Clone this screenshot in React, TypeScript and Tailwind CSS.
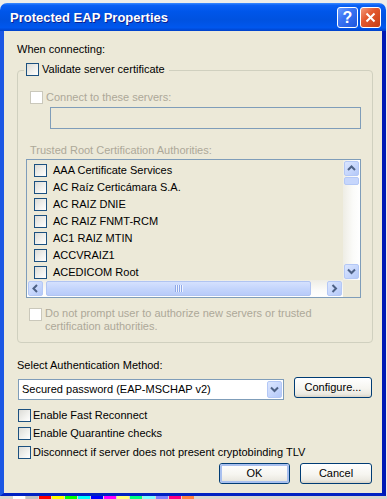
import type { ReactNode } from 'react'

const certs = [
  'AAA Certificate Services',
  'AC Raíz Certicámara S.A.',
  'AC RAIZ DNIE',
  'AC RAIZ FNMT-RCM',
  'AC1 RAIZ MTIN',
  'ACCVRAIZ1',
  'ACEDICOM Root',
]

const swatches = [
  'bg-white',
  'bg-[#c0c0c0]',
  'bg-[#ff0000]',
  'bg-[#ffff00]',
  'bg-[#00ff00]',
  'bg-[#00ffff]',
  'bg-[#0000ff]',
  'bg-[#ff00ff]',
  'bg-[#ffff80]',
  'bg-[#00ff80]',
  'bg-[#80ffff]',
  'bg-[#8080ff]',
  'bg-[#ff0080]',
  'bg-[#ff8040]',
]

function Check({ disabled = false }: { disabled?: boolean }) {
  return disabled ? (
    <span className="block w-[13px] h-[13px] shrink-0 border border-[#cac8bb] bg-white" />
  ) : (
    <span className="block w-[13px] h-[13px] shrink-0 border border-[#1c5180] bg-[linear-gradient(135deg,#dcdcd7_0%,#f2f2ef_60%,#ffffff_100%)]" />
  )
}

function Chevron({ dir }: { dir: 'up' | 'down' | 'left' | 'right' }) {
  const vert = dir === 'up' || dir === 'down'
  const d = {
    up: 'M1 5L4.5 1.5L8 5',
    down: 'M1 1.5L4.5 5L8 1.5',
    left: 'M5 1L1.5 4.5L5 8',
    right: 'M1.5 1L5 4.5L1.5 8',
  }[dir]
  return (
    <svg width={vert ? 9 : 7} height={vert ? 7 : 9} viewBox={vert ? '0 0 9 7' : '0 0 7 9'}>
      <path d={d} fill="none" stroke="#4d6185" strokeWidth="2" />
    </svg>
  )
}

function ScrollBtn({ dir }: { dir: 'up' | 'down' | 'left' | 'right' }) {
  return (
    <div className="w-[17px] h-[17px] shrink-0 p-px">
      <div className="w-full h-full rounded-[2px] border border-[#b4c8f6] bg-[linear-gradient(135deg,#dbe6fe_0%,#c6d6fc_55%,#b3c8f8_100%)] flex items-center justify-center">
        <Chevron dir={dir} />
      </div>
    </div>
  )
}

function XpButton({ children, w, isDefault = false }: { children: ReactNode; w: string; isDefault?: boolean }) {
  return (
    <div className={`${w} h-[21px] rounded-[3px] border border-[#003c74] bg-[linear-gradient(180deg,#ffffff_0%,#f6f5f0_55%,#ebe9e1_85%,#d8d2c6_100%)] flex items-center justify-center`}>
      <div className={`w-full h-full rounded-[2px] flex items-center justify-center ${isDefault ? 'border-2 border-[#a9c0ef]' : ''}`}>
        {children}
      </div>
    </div>
  )
}

function TitleBar() {
  return (
    <div className="h-[28px] rounded-t-[7px] bg-[linear-gradient(180deg,#3d8cff_0%,#0a60f5_8%,#0056ea_30%,#0052e0_60%,#0057ee_88%,#0041c9_100%)] flex items-start pl-[10px] pr-[5px]">
      <span className="mt-[7px] text-[13px] leading-[15px] font-bold text-white [text-shadow:1px_1px_0_#0d1f8f]">
        Protected EAP Properties
      </span>
      <div className="ml-auto mt-[4px] flex gap-[2px]">
        <div className="w-[21px] h-[21px] rounded-[3px] border border-white bg-[linear-gradient(135deg,#6a9cff_0%,#3b74f4_40%,#1d56dd_100%)] flex items-center justify-center">
          <span className="text-white font-bold text-[16px] leading-[16px]">?</span>
        </div>
        <div className="w-[21px] h-[21px] rounded-[3px] border border-white bg-[linear-gradient(135deg,#f39a7c_0%,#e3592f_40%,#c73d14_100%)] flex items-center justify-center">
          <svg width="11" height="11" viewBox="0 0 11 11">
            <path d="M1.5 1.5L9.5 9.5M9.5 1.5L1.5 9.5" stroke="#ffffff" strokeWidth="2" />
          </svg>
        </div>
      </div>
    </div>
  )
}

function CertList() {
  return (
    <div className="ml-[8px] mt-[2px] w-[335px] h-[139px] border border-[#7f9db9] bg-[#ece9d8] flex flex-col">
      <div className="h-[120px] flex">
        <div className="flex-1 pt-[2px] pl-[7px] overflow-hidden">
          {certs.map((c) => (
            <div key={c} className="h-[17px] flex items-center gap-[6px] whitespace-nowrap">
              <Check />
              <span>{c}</span>
            </div>
          ))}
        </div>
        <div className="w-[17px] flex flex-col bg-[linear-gradient(90deg,#eeede5_0%,#fbfbf9_60%,#ffffff_100%)]">
          <ScrollBtn dir="up" />
          <div className="mx-px h-[8px] rounded-[2px] border border-[#b4c8f6] bg-[#c6d6fc]" />
          <div className="flex-1" />
          <ScrollBtn dir="down" />
        </div>
      </div>
      <div className="h-[17px] flex">
        <div className="flex-1 flex bg-[linear-gradient(180deg,#eeede5_0%,#fbfbf9_60%,#ffffff_100%)]">
          <ScrollBtn dir="left" />
          <div className="w-[265px] my-px ml-[2px] rounded-[2px] border border-[#b0c4f2] bg-[linear-gradient(180deg,#d5e1fe_0%,#c4d5fc_50%,#b8cbf9_100%)] flex items-center justify-center">
            <div className="flex gap-px">
              {[0, 1, 2, 3].map((i) => (
                <span key={i} className="block w-px h-[7px] bg-[#8ea8e8] shadow-[1px_0_0_#eef3ff]" />
              ))}
            </div>
          </div>
          <div className="flex-1" />
          <ScrollBtn dir="right" />
        </div>
        <div className="w-[17px] bg-[#ece9d8]" />
      </div>
    </div>
  )
}

export default function App() {
  return (
    <div className="w-[387px] h-[499px] overflow-hidden bg-[#eeede9] font-['Liberation_Sans',Arial,sans-serif] text-[11px] leading-[13px] text-black">
      <div className="h-[3px]" />
      <div className="w-[386px] flex flex-col">
        <TitleBar />
        <div className="h-[465px] bg-[#ece9d8] border-l-4 border-r-4 border-b-[3px] border-l-[#1b57e4] border-r-[#0019b5] border-b-[#0021c2] flex flex-col pl-[13px] pr-[10px] pt-[12px]">
          <div>When connecting:</div>

          <div className="relative mt-[14px] w-[356px] h-[273px] rounded-[4px] border border-[#d0d0bf] flex flex-col">
            <div className="absolute left-[6px] top-[-8px] pl-[2px] pr-[4px] bg-[#ece9d8] flex items-center gap-[3px]">
              <Check />
              <span>Validate server certificate</span>
            </div>

            <div className="mt-[20px] ml-[12px] flex items-center gap-[3px] text-[#aca899]">
              <Check disabled />
              <span>Connect to these servers:</span>
            </div>

            <div className="mt-[3px] ml-[32px] w-[311px] h-[22px] border border-[#7f9db9] bg-[#ece9d8]" />

            <div className="mt-[15px] ml-[12px] text-[#aca899]">Trusted Root Certification Authorities:</div>

            <CertList />

            <div className="mt-[10px] ml-[11px] flex items-start gap-[3px] text-[#aca899]">
              <Check disabled />
              <span className="-mt-px">
                Do not prompt user to authorize new servers or trusted
                <br />
                certification authorities.
              </span>
            </div>
          </div>

          <div className="mt-[16px]">Select Authentication Method:</div>

          <div className="mt-[5px] flex items-start gap-[10px]">
            <div className="mt-[2px] ml-px w-[266px] h-[21px] border border-[#7f9db9] bg-white flex items-center">
              <span className="pl-[3px]">Secured password (EAP-MSCHAP v2)</span>
              <div className="ml-auto mr-px w-[15px] h-[17px] rounded-[2px] border border-[#b4c8f6] bg-[linear-gradient(135deg,#dbe6fe_0%,#c6d6fc_55%,#b3c8f8_100%)] flex items-center justify-center">
                <Chevron dir="down" />
              </div>
            </div>
            <XpButton w="w-[78px]">Configure...</XpButton>
          </div>

          <div className="mt-[9px] ml-px flex items-center gap-[2px]">
            <Check />
            <span>Enable Fast Reconnect</span>
          </div>
          <div className="mt-[5px] ml-px flex items-center gap-[2px]">
            <Check />
            <span>Enable Quarantine checks</span>
          </div>
          <div className="mt-[6px] ml-px flex items-center gap-[2px]">
            <Check />
            <span>Disconnect if server does not present cryptobinding TLV</span>
          </div>

          <div className="mt-[4px] flex justify-end gap-[10px]">
            <XpButton w="w-[71px]" isDefault>
              OK
            </XpButton>
            <XpButton w="w-[72px]">Cancel</XpButton>
          </div>
        </div>
      </div>
      <div className="h-[3px] flex gap-px pl-[13px] bg-[#d8d6cf]">
        {swatches.map((s) => (
          <span key={s} className={`block w-[12px] h-full ${s}`} />
        ))}
      </div>
    </div>
  )
}
